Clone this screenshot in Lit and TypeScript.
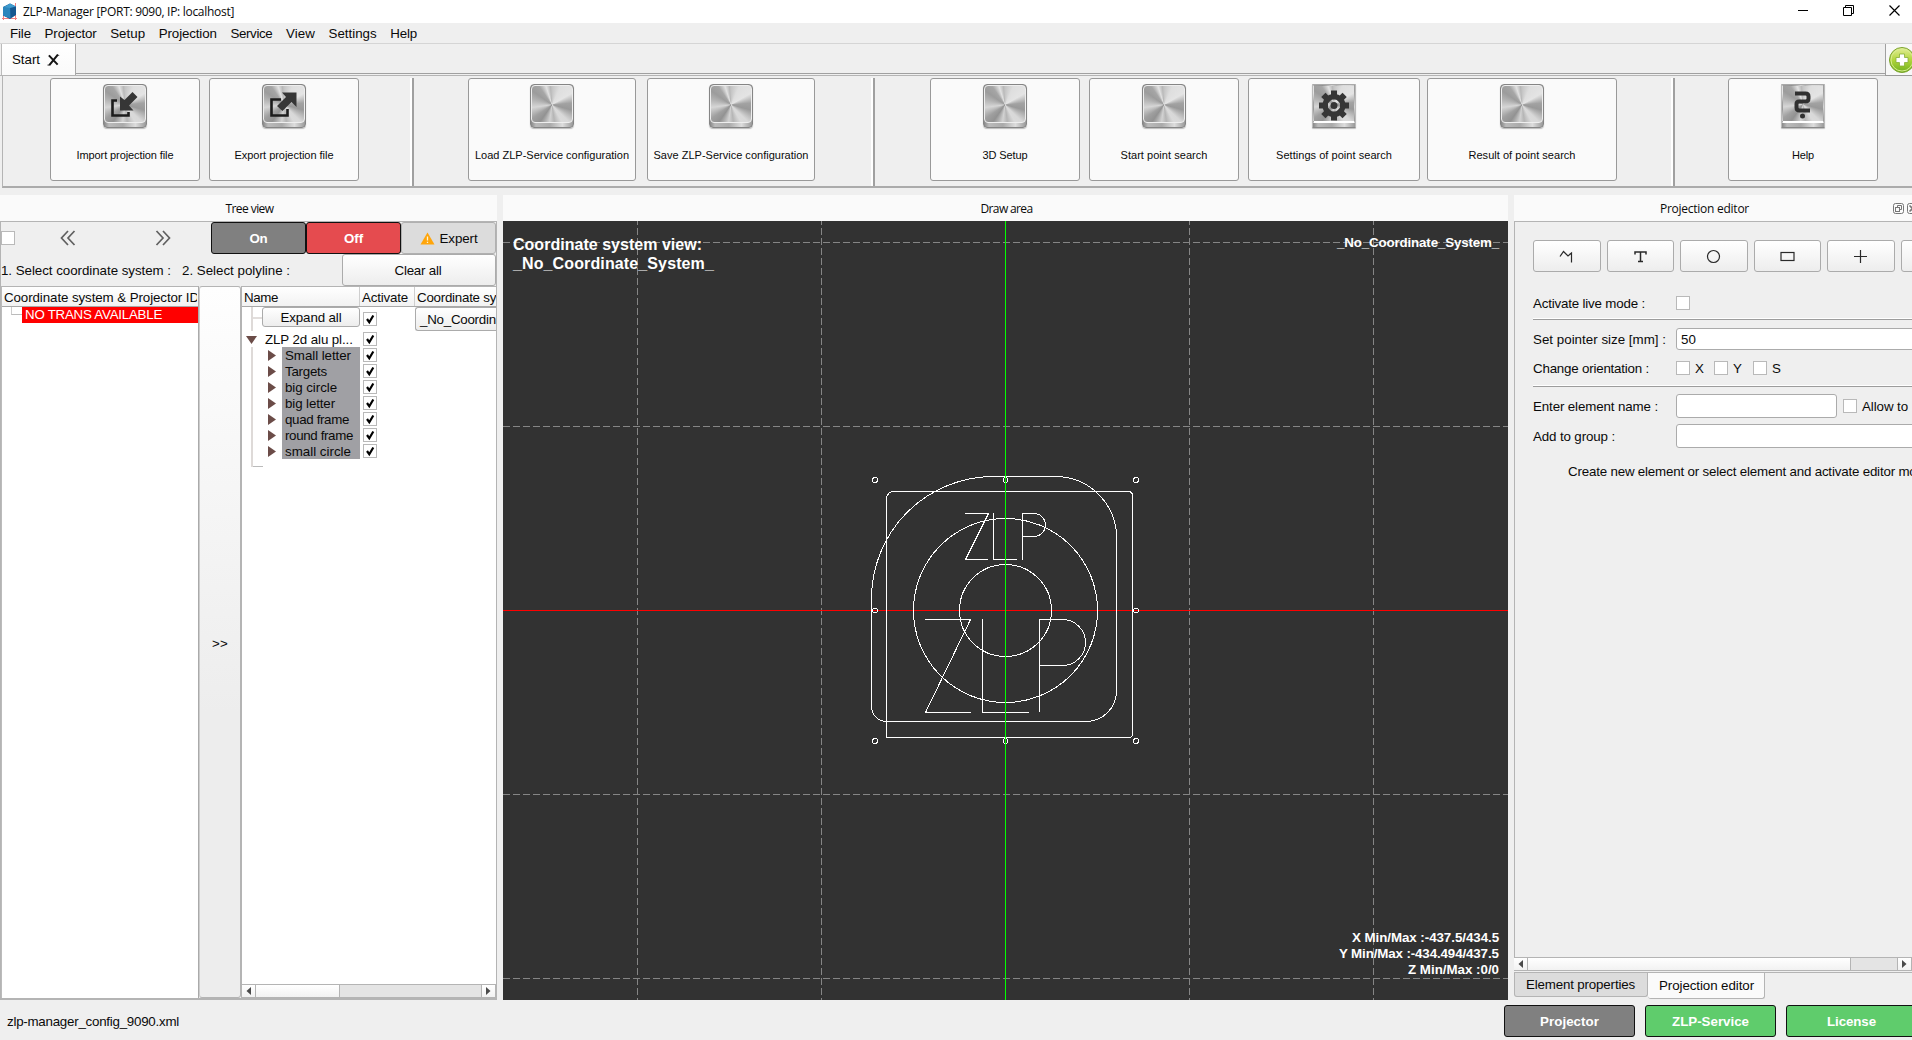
import { LitElement, html, svg, css, nothing } from "lit";
import { customElement } from "lit/decorators.js";

const SANS = '"Liberation Sans", Arial, sans-serif';
const UI = '"Open Sans", "Noto Sans", sans-serif';
const ctx = document.createElement("canvas").getContext("2d")!;

/** Text run whose tracking is computed so that it fills the given width. */
const run = (text: string, width: number, font = `13.33px ${SANS}`) => {
  ctx.font = font;
  const spacing = (width - ctx.measureText(text).width) / text.length;
  return html`<span class="run" style="letter-spacing:${spacing.toFixed(3)}px;width:${width}px">${text}</span>`;
};
const small = (t: string, w: number) => run(t, w, `11px ${SANS}`);
const bold = (t: string, w: number) => run(t, w, `bold 13.33px ${SANS}`);
const ui = (t: string, w: number) => run(t, w, `12px ${UI}`);

const MENU: [string, number][] = [
  ["File", 21], ["Projector", 52], ["Setup", 35], ["Projection", 58],
  ["Service", 42], ["View", 29], ["Settings", 48], ["Help", 27],
];

type Tool = { text: string; w: number; width: number; glyph?: string; flat?: boolean };
const TOOLS: Tool[][] = [
  [
    { text: "Import projection file", w: 97, width: 150, glyph: "import" },
    { text: "Export projection file", w: 99, width: 150, glyph: "export" },
  ],
  [
    { text: "Load ZLP-Service configuration", w: 154, width: 168 },
    { text: "Save ZLP-Service configuration", w: 155, width: 168 },
  ],
  [
    { text: "3D Setup", w: 45, width: 150 },
    { text: "Start point search", w: 87, width: 150 },
    { text: "Settings of point search", w: 116, width: 172, glyph: "gear", flat: true },
    { text: "Result of point search", w: 107, width: 190 },
  ],
  [{ text: "Help", w: 22, width: 150, glyph: "help", flat: true }],
];

const GEAR = Array.from({ length: 8 }, (_, i) => i * 45);
const GLYPHS: Record<string, unknown> = {
  import: svg`<path d="M14 16.500H9.500V31.500H25.500V28" fill="none" stroke="#1c1c1c" stroke-width="2.600"/>
    <path d="M17 26.500V12.500L21.500 16L29.500 8L34.500 13L26 21.500L30.500 26.500Z" fill="#363636"/>`,
  export: svg`<path d="M19 15.500H9.500V31.500H25.500V25" fill="none" stroke="#1c1c1c" stroke-width="2.600"/>
    <path d="M15 22L24 13L20 8.500H34.500V23L29.500 18L20.500 27Z" fill="#363636"/>`,
  gear: svg`${GEAR.map((a) => svg`<rect x="19" y="6.500" width="6" height="9" fill="#363636" transform="rotate(${a} 22 21.500)"/>`)}
    <circle cx="22" cy="21.500" r="9" fill="none" stroke="#363636" stroke-width="5"/>
    <circle cx="22" cy="21.500" r="3.500" fill="#363636"/>`,
  help: svg`<path d="M14 9.500H24.500Q27.500 9.500 27.500 12.500V14.500Q27.500 17.500 24.500 17.500H18Q15.500 17.500 15.500 20V23.500Q15.500 26.500 18.500 26.500H29" fill="none" stroke="#303030" stroke-width="4"/>
    <circle cx="21.500" cy="32" r="2.500" fill="#303030"/>`,
};

const CHILDREN: [string, number][] = [
  ["Small letter", 66], ["Targets", 42], ["big circle", 52], ["big letter", 50],
  ["quad frame", 64], ["round frame", 68], ["small circle", 66],
];

const tick = svg`<path d="M4 7L6.300 10.300L10.300 3.500" fill="none" stroke="#000" stroke-width="2.200"/>`;
const box = (on = false) => html`<span class="box">${on ? html`<svg width="12" height="12" viewBox="1 1 12 12">${tick}</svg>` : nothing}</span>`;

const left = html`<svg width="5" height="8" viewBox="0 0 5 8"><path d="M5 0V8L0.500 4Z" fill="#4a4a4a"/></svg>`;
const right = html`<svg width="5" height="8" viewBox="0 0 5 8"><path d="M0 0V8L4.500 4Z" fill="#4a4a4a"/></svg>`;

const EDIT_ICONS = [
  svg`<path d="M1 7.500L4.500 2.500L9 7L12.500 4V13.500M10.500 5.500L12.500 4" />`,
  svg`<path d="M2 5.500V3H13V5.500M7.500 3V12.500M5 12.500H10" stroke-width="1.500"/>`,
  svg`<circle cx="7.500" cy="7.500" r="6"/>`,
  svg`<rect x="1" y="3.500" width="13" height="8"/>`,
  svg`<path d="M7.500 1V14M1 7.500H14"/>`,
];

@customElement("app-root")
export class AppRoot extends LitElement {
  static styles = css`
    :host { display: block; width: 1912px; height: 1040px; overflow: hidden; background: #efefef;
      font: 13.33px/16px "Liberation Sans", Arial, sans-serif; color: #0a0a0a; }
    * { box-sizing: border-box; }
    svg { display: block; flex: none; }
    .run { display: inline-block; white-space: nowrap; flex: none; }
    .page { display: flex; flex-direction: column; width: 1912px; height: 1040px; overflow: hidden; }
    .page > * { flex-shrink: 0; }
    .ui { font: 12px/16px "Open Sans", "Noto Sans", sans-serif; }
    .title { height: 23px; background: #fff; display: flex; align-items: center; padding: 0 12px 0 2px; }
    .title .run { margin: 1px 0 0 5px; }
    .controls { display: flex; margin-left: auto; gap: 35px; margin-top: -2px; }
    .menu { height: 21px; border-bottom: 1px solid #d5d5d5; display: flex; align-items: center; gap: 13.600px; padding: 2px 0 0 10px; }
    .tabs { height: 32px; display: flex; border-bottom: 1px solid #b4b4b4; }
    .tabs .start { width: 75px; margin-left: 1px; height: 31px; display: flex; align-items: center; gap: 7px; padding-left: 10px;
      background: linear-gradient(#fff, #fafafa); border-right: 1px solid #a8a8a8; border-left: 1px solid #bbb; }
    .tabs .fill { flex: 1; height: 30px; border-bottom: 1px solid #a0a0a0; }
    .tabs .plus { width: 27px; height: 32px; border-left: 1px solid #a0a0a0; background: #f8f8f8; padding: 2px 0 0 2px; border-bottom: 1px solid #999; overflow: hidden; }
    .tools { height: 112px; margin-left: 2px; border-left: 1px solid #b4b4b4; border-bottom: 2px solid #ababab; display: flex; padding-top: 2px; }
    .group { display: flex; gap: 9px; }
    .g0 { margin-left: 47px; } .g1 { margin-left: 54px; gap: 11px; } .g2 { margin-left: 55px; } .g3 { margin-left: 53px; }
    .g2 .tool:last-child { margin-left: -2px; }
    .sep { width: 4px; height: 108px; background: #fff; border-right: 2px solid #a0a0a0; }
    .sep1 { margin-left: 51px; } .sep2 { margin-left: 56px; } .sep3 { margin-left: 54px; }
    .tool { height: 103px; border: 1px solid #999; border-radius: 3px; background: #fafafa; display: flex; flex-direction: column;
      align-items: center; padding-top: 5px; font-size: 11px; line-height: 14px; gap: 20px; }
    .key { width: 44px; height: 44px; border: 1px solid #858585; border-radius: 4px; padding-bottom: 4px; box-shadow: 0 1px 1px #bbb;
      background: linear-gradient(90deg, #888, #bbb 12%, #aaa 45%, #ddd 75%, #999); display: flex; }
    .face { flex: 1; border: 1px solid #eee; border-radius: 4px; 
      background: conic-gradient(from 0deg at 50% 52%, #c4c4c4, #dedede 25deg, #e4e4e4 60deg, #a2a2a2 85deg, #999 105deg, #d8d8d8 135deg, #dadada 150deg, #b5b5b5 172deg, #d2d2d2 188deg, #929292 215deg, #a0a0a0 235deg, #d6d6d6 262deg, #b4b4b4 285deg, #9c9c9c 305deg, #a6a6a6 325deg, #e2e2e2 342deg, #b8b8b8 355deg, #c4c4c4); }
    .face svg { margin: -2px; }
    .key.flat, .key.flat .face { border-radius: 1px; }
    .key.flat { border-color: #aaa #bbb #888; }
    .key.flat .face { border-color: transparent transparent #fff; border-bottom-width: 2px; }
    .main { height: 812px; padding-top: 7px; display: flex; gap: 6px; }
    .dock { display: flex; flex-direction: column; height: 805px; }
    .dockhead { height: 26px; background: #fafafa; display: flex; justify-content: center; align-items: center; flex: none; padding: 1px 0 0 2px; }
    .tree { width: 497px; } .draw { width: 1005px; } .edit { width: 398px; }
    .edit .dockhead { padding-left: 146px; justify-content: flex-start; }
    .winbtns { display: flex; gap: 3px; margin: -1px 0 0 144px; }
    .treebody { border: 1px solid #b4b4b4; border-bottom: 2px solid #b4b4b4; height: 779px; }
    .bar { height: 32px; display: flex; align-items: center; }
    .box { width: 14px; height: 14px; border: 1px solid #b9b9b9; background: #fff; flex: none; display: inline-block; }
    .chev1 { margin-left: 45px; } .chev2 { margin-left: 79px; }
    .big { width: 95px; height: 32px; border: 1px solid #111; border-radius: 3px; color: #fff; display: flex; align-items: center; justify-content: center; flex: none; padding-top: 1px; }
    .bold { font-weight: bold; }
    .on { background: #808080; margin-left: 40px; } .off { background: #e54b4f; }
    .expert { background: #dcdcdc; color: #0a0a0a; border-color: #b0b0b0; gap: 5px; }
    .gradbtn { border: 1px solid #ababab; border-radius: 3px; background: linear-gradient(#fff, #ededed); display: flex; align-items: center; justify-content: center; }
    .clear { width: 154px; height: 32px; margin-left: auto; padding: 1px 2px 0 0; }
    .step { margin: 1px 0 0 0; } .step2 { margin: 1px 0 0 11px; }
    .lists { display: flex; height: 712px; }
    .list1 { width: 198px; border-top: 1px solid #b4b4b4; border-right: 1px solid #aaa; border-left: 1px solid #bbb; background: #fff; }
    .head { height: 20px; border-bottom: 1px solid #a8a8a8; background: linear-gradient(#fff, #f2f2f2); display: flex; align-items: center; overflow: hidden; }
    .head .cell { height: 19px; padding: 3px 0 0 2px; border-right: 1px solid #cfcfcf; overflow: hidden; white-space: nowrap; }
    .cell.name { width: 118px; } .cell.act { width: 55px; } .cell.crd { flex: 1; border: 0; } .cell.idc { margin-right: 1px; }
    .trans { display: flex; height: 16px; }
    .elbow { width: 11px; height: 8px; margin-left: 9px; border-left: 1px solid #ccc; border-bottom: 1px solid #bbb; }
    .red { flex: 1; background: #f00; color: #fff; padding-left: 3px; }
    .split { width: 42px; border: 1px solid #b4b4b4; border-left: 1px solid #ccc; border-radius: 3px; background: linear-gradient(#fefefe, #ededed 60%); display: flex; justify-content: center; align-items: center; padding-top: 3px; }
    .list2 { width: 255px; border-top: 1px solid #b4b4b4; border-left: 1px solid #b4b4b4; background: #fff; display: flex; flex-direction: column; }
    .rows { display: flex; flex: 1; }
    .names { width: 118px; display: flex; flex-direction: column; }
    .names .first { height: 25px; display: flex; margin-left: 9px; }
    .names .stub { width: 11px; height: 24px; border-left: 2px solid #dedad8; display: flex; align-items: center; }
    .names .stub i { height: 2px; width: 9px; background: #e2dedc; margin-top: -3px; }
    .expand { width: 98px; height: 20px; padding-top: 1px; }
    .parent { height: 15px; display: flex; align-items: center; gap: 8px; padding-left: 4px; }
    .kids { margin-left: 9px; width: 109px; border-left: 2px solid #dedad8; height: 120px; }
    .kids .end { width: 10px; height: 8px; border-bottom: 1px solid #bbb; }
    .kid { height: 16px; display: flex; align-items: center; padding-left: 15px; }
    .kid svg { margin-right: 6px; }
    .kid .tag { height: 16px; flex: 1; background: #a0a0a4; padding: 1px 0 0 3px; }
    .checks { width: 55px; padding: 5px 0 0 3px; display: flex; flex-direction: column; gap: 2px; }
    .checks .box:first-child { margin-bottom: 4px; }
    .combo { flex: 1; height: 24px; border: 1px solid #ababab; border-right: 0; border-radius: 3px 0 0 3px; background: linear-gradient(#fff, #ededed); padding: 4px 0 0 4px; overflow: hidden; }
    .scroll { height: 14px; border: 1px solid #b4b4b4; border-left: 0; background: #e4e4e4; display: flex; flex: none; }
    .scroll > * { background: linear-gradient(#fff, #f2f2f2); border-right: 1px solid #b4b4b4; display: flex; align-items: center; justify-content: center; }
    .scroll .arr { width: 14px; }
    .scroll .arr:last-child { margin-left: auto; border-left: 1px solid #b4b4b4; border-right: 0; }
    .thumb { width: 84px; }
    .canvas { position: relative; height: 779px; background: #323232; color: #fff; font-weight: bold; display: flex; justify-content: space-between; }
    .canvas .scene { position: absolute; left: 0; top: 0; }
    .csys { position: relative; font-size: 16px; line-height: 19px; padding: 14px 0 0 10px; display: flex; flex-direction: column; }
    .stats { position: relative; display: flex; flex-direction: column; align-items: flex-end; padding: 14px 9px 0 0; }
    .stats .run:nth-child(2) { margin-top: auto; }
    .stats .run:last-child { margin-bottom: 22px; }
    .form { height: 736px; border-left: 1px solid #b4b4b4; border-top: 1px solid #b4b4b4; padding: 18px 0 0 18px; overflow: hidden; }
    .icons { display: flex; gap: 6px; width: 500px; }
    .icons .gradbtn { width: 67.500px; height: 32px; }
    .line { display: flex; align-items: center; height: 24px; width: 500px; }
    .line .cap { width: 143px; flex: none; padding-top: 1px; }
    .l1 { margin-top: 19px; } .l2 { margin-top: 7px; } .l3 { margin-top: 5px; } .l4 { margin-top: 7px; } .l5 { margin-top: 6px; }
    .rule { height: 2px; border-top: 1px solid #fff; background: #9c9c9c; width: 400px; margin-top: 3px; }
    .rule.two { margin-top: 5px; }
    .input { border: 1px solid #ababab; border-radius: 3px; background: #fff; width: 300px; height: 22px; padding: 3px 0 0 4px; }
    .input.tall { height: 24px; } .input.nm { width: 161px; margin-right: 6px; }
    .ax { margin: 1px 11px 0 5px; }
    .hint { margin: 16px 0 0 35px; white-space: nowrap; }
    .dtabs { height: 28px; border-top: 1px solid #b4b4b4; margin-top: 1px; display: flex; align-items: flex-start; }
    .dtab { height: 24px; width: 134px; padding: 4px 0 0 11px; background: #dcdcdc; border: 1px solid #b4b4b4; border-top: 0; border-radius: 0 0 3px 3px; }
    .dtab.cur { height: 26px; width: 117px; background: #fafafa; padding-top: 5px; border-left: 0; }
    .foot { height: 40px; display: flex; align-items: center; padding: 2px 0 0 7px; }
    .foot > .run { margin-top: 1px; }
    .foot .btns { display: flex; gap: 10px; margin-left: auto; margin-right: -5px; }
    .foot .big { width: 131px; } .gray { background: #808080; } .green { background: #5fcc6c; }
  `;

  private tool(t: Tool) {
    return html`<div class="tool" style="width:${t.width}px">
      <div class="key ${t.flat ? "flat" : ""}"><div class="face">
        ${t.glyph ? html`<svg width="44" height="44" viewBox="0 0 44 44">${GLYPHS[t.glyph]}</svg>` : nothing}
      </div></div>
      ${small(t.text, t.w)}
    </div>`;
  }

  private scene() {
    const hs = [875, 1005.5, 1136], vs = [480, 610.5, 741];
    return html`<svg class="scene" width="1005" height="779" viewBox="503 221 1005 779" fill="none" stroke="#fff" shape-rendering="crispEdges">
      <g stroke="#858585" stroke-dasharray="7 3">
        ${[242.5, 426.5, 794.5, 978.5].map((y) => svg`<path d="M503 ${y}H1508"/>`)}
        ${[637.5, 821.5, 1189.5, 1373.5].map((x) => svg`<path d="M${x} 218V1000"/>`)}
      </g>
      <path d="M503 610.500H1508" stroke="#f00"/>
      <circle cx="1005.500" cy="610.500" r="46"/><circle cx="1005.500" cy="610.500" r="92"/>
      <path d="M886.500 499.500Q886.500 491.500 894.500 491.500H1128.500Q1132.500 491.500 1132.500 495.500V735.500L1130.500 737.500H886.500Z"/>
      <path d="M993.500 476.500H1055.500A61 61 0 0 1 1116.500 537.500V691A30.500 30.500 0 0 1 1086 721.500H886.500A15 15 0 0 1 871.500 706.500V598.500A122 122 0 0 1 993.500 476.500Z"/>
      <path d="M965 513.500H988.500L965.500 559.500H988M993.500 513V559.500H1017M1022.500 560V513.500H1034A11.500 11.500 0 0 1 1034 536.500H1022.500"/>
      <path d="M925 619.500H970.500L925.500 712.500H971M982.500 619V712.500H1029M1039.500 712V619.500H1062.500A23 23 0 0 1 1062.500 665.500H1039.500"/>
      ${hs.flatMap((x) => vs.map((y) => (x === 1005.5 && y === 610.5 ? nothing : svg`<circle cx="${x}" cy="${y}" r="2.500"/>`)))}
      <path d="M1005.500 221V1000" stroke="#0f0"/>
    </svg>`;
  }

  render() {
    return html`<div class="page">
      <div class="title ui">
        <svg width="16" height="17" viewBox="0 0 16 17"><path d="M0 15.500H15M13.500 0V17M1.500 10V17" stroke="#f08080" fill="none"/>
          <path d="M8 0.500L14 3.500V12L8 16L1 12.500V4Z" fill="#15568f"/><path d="M1 4L8 3L8.500 15.500L1 12.500Z" fill="#2c86bd"/><path d="M8 0.500L14 3.500L8 5L2 4Z" fill="#3f9bce"/></svg>
        ${ui("ZLP-Manager [PORT: 9090, IP: localhost]", 211)}
        <div class="controls">
          <svg width="10" height="11" viewBox="0 0 10 11"><path d="M0 5.500H10" stroke="#000"/></svg>
          <svg width="11" height="11" viewBox="0 0 11 11" fill="none" stroke="#000"><path d="M0.500 2.500H8.500V10.500H0.500ZM2.500 2.500V0.500H10.500V8.500H8.500"/></svg>
          <svg width="11" height="11" viewBox="0 0 11 11"><path d="M0.500 0.500L10.500 10.500M10.500 0.500L0.500 10.500" stroke="#000" stroke-width="1.200"/></svg>
        </div>
      </div>
      <div class="menu">${MENU.map(([t, w]) => run(t, w))}</div>
      <div class="tabs">
        <div class="start">${run("Start", 28)}
          <svg width="13" height="12" viewBox="0 0 14 13"><path d="M2 1.500L11.500 11.500M11.500 1L2.500 12" stroke="#151515" stroke-width="2.200"/><path d="M11 0L13 2M0.500 12H3" stroke="#151515" stroke-width="1"/></svg>
        </div>
        <div class="fill"></div>
        <div class="plus"><svg width="28" height="28" viewBox="0 0 28 28">
          <defs><linearGradient id="g" x2="0" y2="1"><stop offset="0" stop-color="#e4ee9a"/><stop offset=".5" stop-color="#b2d63c"/><stop offset="1" stop-color="#6fb01c"/></linearGradient></defs>
          <circle cx="14" cy="14" r="12.500" fill="url(#g)" stroke="#7aa32c"/><circle cx="14" cy="14" r="11" fill="none" stroke="#d8ec90"/>
          <path d="M11.500 8H16.500V11.500H20V16.500H16.500V20H11.500V16.500H8V11.500H11.500Z" fill="#fff" stroke="#86ad3a" stroke-width=".8"/></svg></div>
      </div>
      <div class="tools">
        ${TOOLS.map((g, i) => html`${i ? html`<div class="sep sep${i}"></div>` : nothing}<div class="group g${i}">${g.map((t) => this.tool(t))}</div>`)}
      </div>
      <div class="main">
        <div class="dock tree">
          <div class="dockhead ui">${ui("Tree view", 48)}</div>
          <div class="treebody">
            <div class="bar">${box()}
              <svg class="chev1" width="16" height="16" viewBox="0 0 16 16" fill="none" stroke="#606060" stroke-width="1.700"><path d="M8 1L1.500 8L8 15M14.500 1L8 8L14.500 15"/></svg>
              <svg class="chev2" width="16" height="16" viewBox="0 0 16 16" fill="none" stroke="#606060" stroke-width="1.700"><path d="M1.500 1L8 8L1.500 15M8 1L14.500 8L8 15"/></svg>
              <div class="big bold on">${bold("On", 18)}</div>
              <div class="big bold off">${bold("Off", 19)}</div>
              <div class="big expert"><svg width="15" height="13" viewBox="0 0 15 13"><path d="M7.500 0.500L14.500 12.500H0.500Z" fill="#ffa50a"/><path d="M7.500 4.500V8.500M7.500 9.800V11" stroke="#fff4d8" stroke-width="1.300"/></svg>${run("Expert", 38)}</div>
            </div>
            <div class="bar"><span class="step">${run("1. Select coordinate system :", 170)}</span><span class="step2">${run("2. Select polyline :", 108)}</span>
              <div class="gradbtn clear">${run("Clear all", 47)}</div></div>
            <div class="lists">
              <div class="list1">
                <div class="head"><div class="cell crd idc">${run("Coordinate system & Projector ID", 195)}</div></div>
                <div class="trans"><span class="elbow"></span><span class="red">${run("NO TRANS AVAILABLE", 138)}</span></div>
              </div>
              <div class="split">${run(">>", 16)}</div>
              <div class="list2">
                <div class="head"><div class="cell name">${run("Name", 34)}</div><div class="cell act">${run("Activate", 46)}</div><div class="cell crd">${run("Coordinate system", 107)}</div></div>
                <div class="rows">
                  <div class="names">
                    <div class="first"><span class="stub"><i></i></span><div class="gradbtn expand">${run("Expand all", 61)}</div></div>
                    <div class="parent"><svg width="11" height="8" viewBox="0 0 11 8"><path d="M0 0H11L5.500 8Z" fill="#6b4c48"/></svg>${run("ZLP 2d alu pl...", 88)}</div>
                    <div class="kids">${CHILDREN.map(([t, w]) => html`<div class="kid"><svg width="8" height="11" viewBox="0 0 8 11"><path d="M0 0V11L8 5.500Z" fill="#6b4c48"/></svg><span class="tag">${run(t, w)}</span></div>`)}<div class="end"></div></div>
                  </div>
                  <div class="checks">${Array.from({ length: 9 }, () => box(true))}</div>
                  <div class="combo">${run("_No_Coordinate_System_", 151)}</div>
                </div>
                <div class="scroll"><div class="arr">${left}</div><div class="thumb"></div><div class="arr">${right}</div></div>
              </div>
            </div>
          </div>
        </div>
        <div class="dock draw">
          <div class="dockhead ui">${ui("Draw area", 52)}</div>
          <div class="canvas">${this.scene()}
            <div class="csys">${run("Coordinate system view:", 189, `bold 16px ${SANS}`)}${run("_No_Coordinate_System_", 201, `bold 16px ${SANS}`)}</div>
            <div class="stats">${bold("_No_Coordinate_System_", 162)}${bold("X Min/Max :-437.5/434.5", 147)}${bold("Y Min/Max :-434.494/437.5", 160)}${bold("Z Min/Max :0/0", 91)}</div>
          </div>
        </div>
        <div class="dock edit">
          <div class="dockhead ui">${ui("Projection editor", 89)}
            <div class="winbtns">
              <svg width="11" height="11" viewBox="0 0 11 11" fill="none" stroke="#777"><rect x=".5" y=".5" width="10" height="10" rx="2"/><rect x="2.500" y="4.500" width="4" height="4"/><path d="M4.500 4V2.500H8.500V6.500H7"/></svg>
              <svg width="11" height="11" viewBox="0 0 11 11" fill="none" stroke="#777"><rect x=".5" y=".5" width="10" height="10" rx="2"/><path d="M2.500 2.500L8.500 8.500M8.500 2.500L2.500 8.500" stroke-width="1.600"/></svg>
            </div>
          </div>
          <div class="form">
            <div class="icons">${EDIT_ICONS.map((i) => html`<div class="gradbtn"><svg width="15" height="15" viewBox="0 0 15 15" fill="none" stroke="#2a2a2a" stroke-width="1.200">${i}</svg></div>`)}<div class="gradbtn"></div></div>
            <div class="line l1"><span class="cap">${run("Activate live mode :", 112)}</span>${box()}</div>
            <div class="rule"></div>
            <div class="line l2"><span class="cap">${run("Set pointer size [mm] :", 133)}</span><div class="input">${run("50", 15)}</div></div>
            <div class="line l3"><span class="cap">${run("Change orientation :", 116)}</span>${box()}<span class="ax">${run("X", 8)}</span>${box()}<span class="ax">${run("Y", 9)}</span>${box()}<span class="ax">${run("S", 9)}</span></div>
            <div class="rule two"></div>
            <div class="line l4"><span class="cap">${run("Enter element name :", 125)}</span><div class="input tall nm"></div>${box()}<span class="ax">${run("Allow to", 46)}</span></div>
            <div class="line l5"><span class="cap">${run("Add to group :", 82)}</span><div class="input tall"></div></div>
            <div class="hint">${run("Create new element or select element and activate editor mode", 363)}</div>
          </div>
          <div class="scroll pscroll"><div class="arr">${left}</div><div class="thumb" style="width:323px"></div><div class="arr">${right}</div></div>
          <div class="dtabs"><div class="dtab">${run("Element properties", 109)}</div><div class="dtab cur">${run("Projection editor", 95)}</div></div>
        </div>
      </div>
      <div class="foot">${run("zlp-manager_config_9090.xml", 172)}
        <div class="btns"><div class="big bold gray">${bold("Projector", 59)}</div><div class="big bold green">${bold("ZLP-Service", 77)}</div><div class="big bold green">${bold("License", 49)}</div></div>
      </div>
    </div>`;
  }
}
